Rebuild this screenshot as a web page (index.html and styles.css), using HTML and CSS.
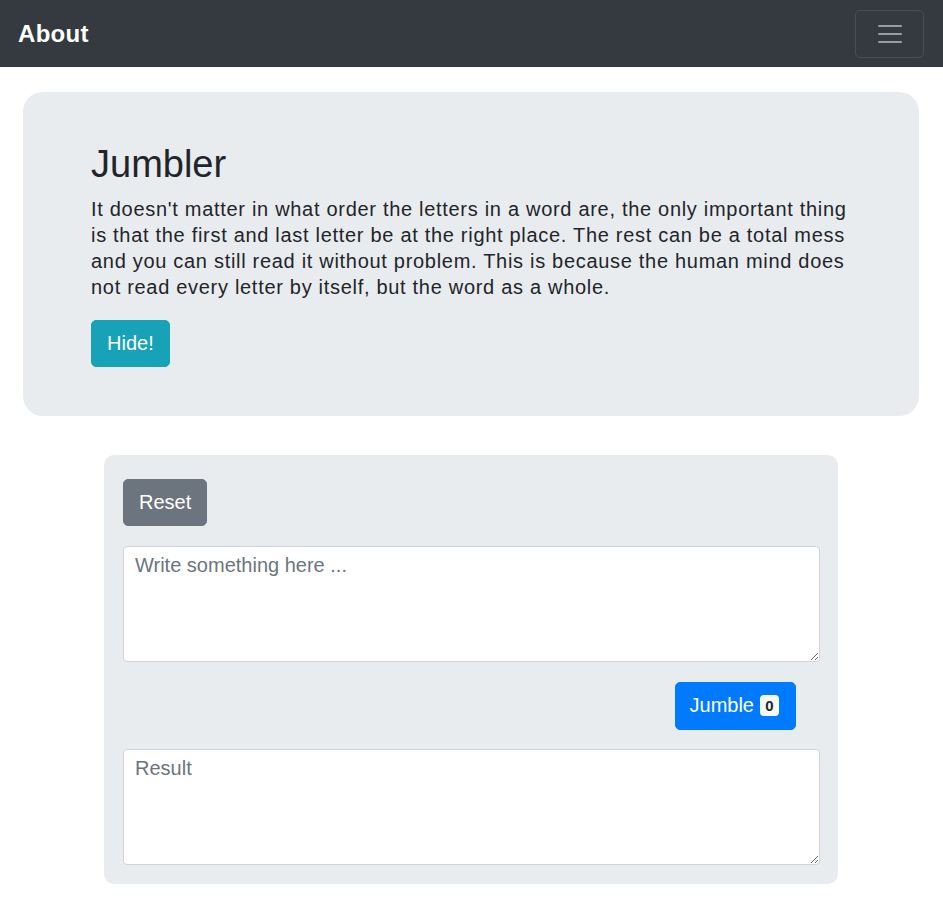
FILE: index.html
```html
<!DOCTYPE html>
<html>
<head>
<meta charset="utf-8">
<link rel="stylesheet" href="styles.css">
</head>
<body>
<nav class="navbar">
  <span class="brand">About</span>
  <button class="toggler" aria-label="menu">
    <svg width="30" height="30" viewBox="0 0 30 30"><path d="M4 7h22M4 15h22M4 23h22" stroke="rgba(255,255,255,0.5)" stroke-width="2" stroke-linecap="round"/></svg>
  </button>
</nav>
<main class="page">
  <section class="jumbotron">
    <h1 class="title">Jumbler</h1>
    <p class="lead">It doesn't matter in what order the letters in a word are, the only important thing is that the first and last letter be at the right place. The rest can be a total mess and you can still read it without problem. This is because the human mind does not read every letter by itself, but the word as a whole.</p>
    <button class="btn btn-info">Hide!</button>
  </section>
  <section class="card">
    <div class="row-left"><button class="btn btn-secondary">Reset</button></div>
    <textarea class="field" placeholder="Write something here ..."></textarea>
    <div class="row-right"><button class="btn btn-primary">Jumble <span class="badge">0</span></button></div>
    <textarea class="field" placeholder="Result"></textarea>
  </section>
</main>
</body>
</html>
```
FILE: styles.css
```css
* { box-sizing: border-box; }
body {
  margin: 0;
  font-family: "Liberation Sans", Arial, sans-serif;
  color: #212529;
  background: #fff;
}
.navbar {
  height: 67px;
  background: #343a40;
  display: flex;
  align-items: center;
  justify-content: space-between;
  padding: 0 19px 0 18px;
}
.brand {
  color: #fff;
  font-weight: bold;
  font-size: 24px;
  letter-spacing: 0.3px;
}
.toggler {
  width: 69px;
  height: 48px;
  background: transparent;
  border: 1px solid rgba(255,255,255,0.1);
  border-radius: 5px;
  display: flex;
  align-items: center;
  justify-content: center;
  padding: 0;
}
.page {
  padding: 25px 24px 24px 23px;
  display: flex;
  flex-direction: column;
  align-items: center;
}
.jumbotron {
  width: 100%;
  background: #e9ecef;
  border-radius: 20px;
  padding: 50px 68px 49px 68px;
}
.title {
  margin: 0 0 8px 0;
  font-size: 38px;
  font-weight: normal;
  line-height: 1.2;
}
.lead {
  margin: 0 0 20px 0;
  font-size: 20px;
  letter-spacing: 0.7px;
  line-height: 26px;
}
.btn {
  font-family: inherit;
  font-size: 20px;
  color: #fff;
  border: 1px solid transparent;
  border-radius: 5px;
  height: 47px;
  padding: 0 15px;
  display: inline-flex;
  align-items: center;
  gap: 6px;
}
.btn-info { background: #17a2b8; border-color: #17a2b8; }
.btn-secondary { background: #6c757d; border-color: #6c757d; }
.btn-primary { background: #007bff; border-color: #007bff; height: 48px; padding: 0 16px 0 14px; }
.badge {
  background: #f8f9fa;
  color: #212529;
  font-size: 15px;
  font-weight: bold;
  border-radius: 4px;
  width: 19px;
  height: 21px;
  display: inline-flex;
  align-items: center;
  justify-content: center;
  line-height: 1;
}
.card {
  width: 734px;
  margin-top: 39px;
  background: #e9ecef;
  border-radius: 10px;
  padding: 24px 18px 19px 19px;
  display: flex;
  flex-direction: column;
  gap: 20px;
}
.row-left { display: flex; }
.row-right { display: flex; justify-content: flex-end; padding-right: 24px; margin-bottom: -1px; }
.field {
  display: block;
  width: 100%;
  height: 116px;
  border: 1px solid #ced4da;
  border-radius: 4px;
  background: #fff;
  font-family: inherit;
  font-size: 20px;
  color: #495057;
  padding: 7px 11px;
  resize: vertical;
}
.field::placeholder { color: #6c757d; }
```
